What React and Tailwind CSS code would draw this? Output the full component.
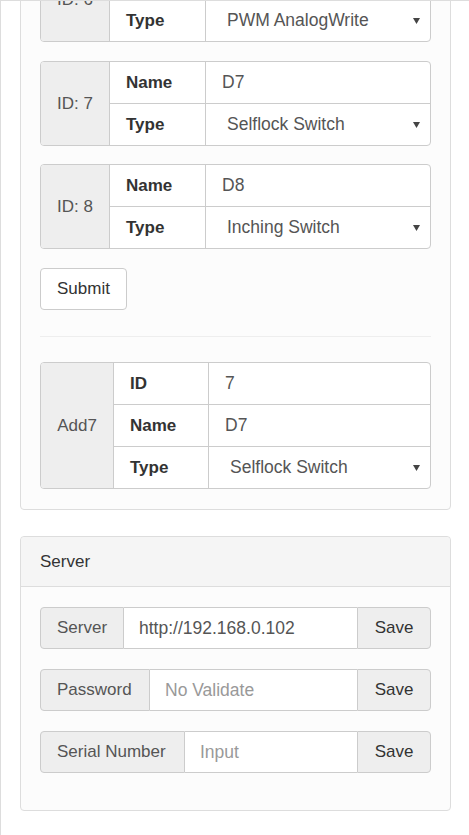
function Caret() {
  return (
    <svg width="7" height="6" viewBox="0 0 7 6" className="ml-auto mr-[10px] shrink-0">
      <path d="M0 0h7L3.5 6z" fill="#444" />
    </svg>
  );
}

function PinGroup({ title, rows, leftW, labelW, className = "" }) {
  return (
    <div className={`flex rounded-[4px] border border-[#ccc] overflow-hidden bg-white ${className}`}>
      <div className={`${leftW} shrink-0 bg-[#eee] border-r border-[#ccc] flex items-center justify-center text-[#555]`}>
        {title}
      </div>
      <div className="flex-1 flex flex-col">
        {rows.map((r, i) => (
          <div key={i} className={`flex ${i > 0 ? "h-[42px] border-t border-[#ccc]" : "h-[41px]"}`}>
            <div className={`${labelW} shrink-0 border-r border-[#ccc] pl-[16px] flex items-center font-bold text-[#333]`}>
              {r.label}
            </div>
            {r.select ? (
              <div className="flex-1 flex items-center pl-[21px] text-[#555] text-[17.5px]">
                <span>{r.value}</span>
                <Caret />
              </div>
            ) : (
              <div className="flex-1 flex items-center pl-[16px] text-[#555] text-[17.5px]">{r.value}</div>
            )}
          </div>
        ))}
      </div>
    </div>
  );
}

function SaveRow({ label, addonW, value, placeholder, className = "" }) {
  return (
    <div className={`flex h-[42px] ${className}`}>
      <div className={`${addonW} shrink-0 bg-[#eee] border border-[#ccc] rounded-l-[4px] flex items-center pl-[16px] text-[#555]`}>
        {label}
      </div>
      <div className="flex-1 bg-white border-y border-[#ccc] flex items-center pl-[15px] text-[17.5px]">
        {value ? <span className="text-[#555]">{value}</span> : <span className="text-[#999]">{placeholder}</span>}
      </div>
      <div className="w-[74px] shrink-0 bg-[#eee] border border-[#ccc] rounded-r-[4px] flex items-center justify-center text-[#333]">
        Save
      </div>
    </div>
  );
}

export default function App() {
  return (
    <div className="w-[469px] h-[835px] overflow-hidden border-l border-t border-[#ddd] bg-white pl-[19px] font-['Liberation_Sans',Arial,sans-serif] text-[17px]">
      {/* Pin list panel */}
      <div className="-mt-[65px] w-[431px] rounded-[4px] border border-[#ddd] bg-[#fcfcfc] px-[19px] pt-[20px] pb-[20px]">
        <PinGroup
          title="ID: 6"
          leftW="w-[69px]"
          labelW="w-[96px]"
          rows={[
            { label: "Name", value: "D6" },
            { label: "Type", value: "PWM AnalogWrite", select: true },
          ]}
        />
        <PinGroup
          className="mt-[19px]"
          title="ID: 7"
          leftW="w-[69px]"
          labelW="w-[96px]"
          rows={[
            { label: "Name", value: "D7" },
            { label: "Type", value: "Selflock Switch", select: true },
          ]}
        />
        <PinGroup
          className="mt-[18px]"
          title="ID: 8"
          leftW="w-[69px]"
          labelW="w-[96px]"
          rows={[
            { label: "Name", value: "D8" },
            { label: "Type", value: "Inching Switch", select: true },
          ]}
        />

        <button className="mt-[19px] w-[87px] h-[42px] rounded-[4px] border border-[#ccc] bg-white text-[#333] block">
          Submit
        </button>

        <div className="mt-[26px] h-px bg-[#eee]" />

        <PinGroup
          className="mt-[25px]"
          title="Add7"
          leftW="w-[73px]"
          labelW="w-[95px]"
          rows={[
            { label: "ID", value: "7" },
            { label: "Name", value: "D7" },
            { label: "Type", value: "Selflock Switch", select: true },
          ]}
        />
      </div>

      {/* Server panel */}
      <div className="mt-[26px] w-[431px] rounded-[4px] border border-[#ddd] bg-[#fcfcfc]">
        <div className="h-[50px] bg-[#f5f5f5] border-b border-[#ddd] rounded-t-[4px] flex items-center pl-[19px] text-[#333]">
          Server
        </div>
        <div className="px-[19px] pt-[20px] pb-[37px] flex flex-col gap-[20px]">
          <SaveRow label="Server" addonW="w-[84px]" value="http://192.168.0.102" />
          <SaveRow label="Password" addonW="w-[110px]" placeholder="No Validate" />
          <SaveRow label="Serial Number" addonW="w-[145px]" placeholder="Input" />
        </div>
      </div>
    </div>
  );
}
